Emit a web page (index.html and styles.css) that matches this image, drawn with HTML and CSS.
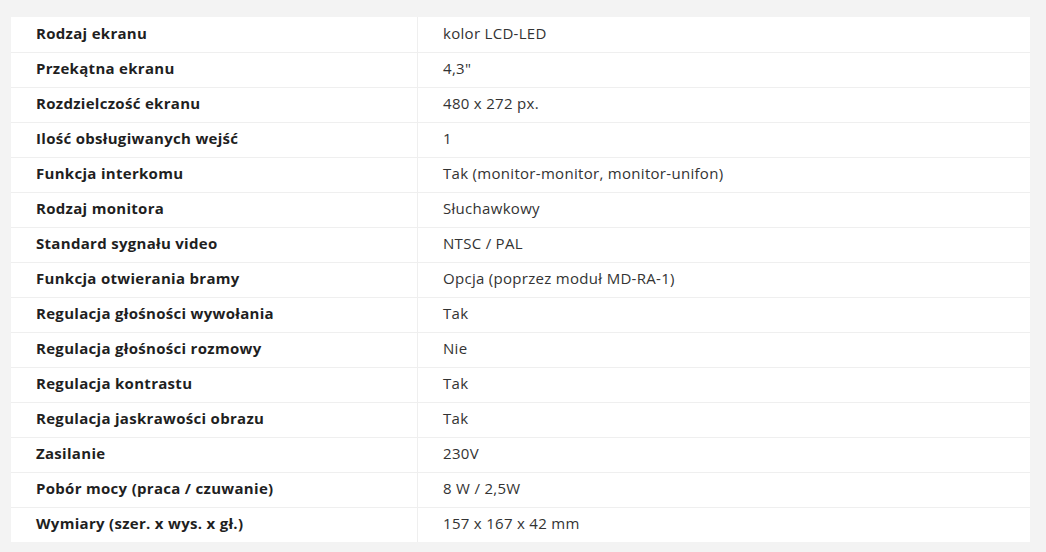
FILE: index.html
```html
<!DOCTYPE html>
<html lang="pl">
<head>
<meta charset="utf-8">
<link rel="stylesheet" href="styles.css">
</head>
<body>
<table class="specs">
<tbody>
<tr><th>Rodzaj ekranu</th><td>kolor LCD-LED</td></tr>
<tr><th>Przekątna ekranu</th><td>4,3"</td></tr>
<tr><th>Rozdzielczość ekranu</th><td>480 x 272 px.</td></tr>
<tr><th>Ilość obsługiwanych wejść</th><td>1</td></tr>
<tr><th>Funkcja interkomu</th><td>Tak (monitor-monitor, monitor-unifon)</td></tr>
<tr><th>Rodzaj monitora</th><td>Słuchawkowy</td></tr>
<tr><th>Standard sygnału video</th><td>NTSC / PAL</td></tr>
<tr><th>Funkcja otwierania bramy</th><td>Opcja (poprzez moduł MD-RA-1)</td></tr>
<tr><th>Regulacja głośności wywołania</th><td>Tak</td></tr>
<tr><th>Regulacja głośności rozmowy</th><td>Nie</td></tr>
<tr><th>Regulacja kontrastu</th><td>Tak</td></tr>
<tr><th>Regulacja jaskrawości obrazu</th><td>Tak</td></tr>
<tr><th>Zasilanie</th><td>230V</td></tr>
<tr><th>Pobór mocy (praca / czuwanie)</th><td>8 W / 2,5W</td></tr>
<tr><th>Wymiary (szer. x wys. x gł.)</th><td>157 x 167 x 42 mm</td></tr>
</tbody>
</table>
</body>
</html>
```
FILE: styles.css
```css
html, body {
  margin: 0;
  padding: 0;
  background: #f3f3f3;
}
body {
  padding: 17px 0 0 11px;
  font-family: "Open Sans", "Liberation Sans", sans-serif;
  font-size: 15px;
  letter-spacing: 0.3px;
}
.specs {
  width: 1019px;
  border-collapse: collapse;
  background: #fff;
}
.specs tr {
  height: 35px;
}
.specs tr + tr th,
.specs tr + tr td {
  border-top: 1px solid #efefef;
}
.specs th {
  width: 381px;
  text-align: left;
  font-weight: 700;
  color: #1f1f1f;
  padding: 0 0 3px 25px;
  border-right: 1px solid #efefef;
}
.specs td {
  color: #333;
  padding: 0 0 3px 25px;
}
.specs th, .specs td {
  vertical-align: middle;
  white-space: nowrap;
}
```
